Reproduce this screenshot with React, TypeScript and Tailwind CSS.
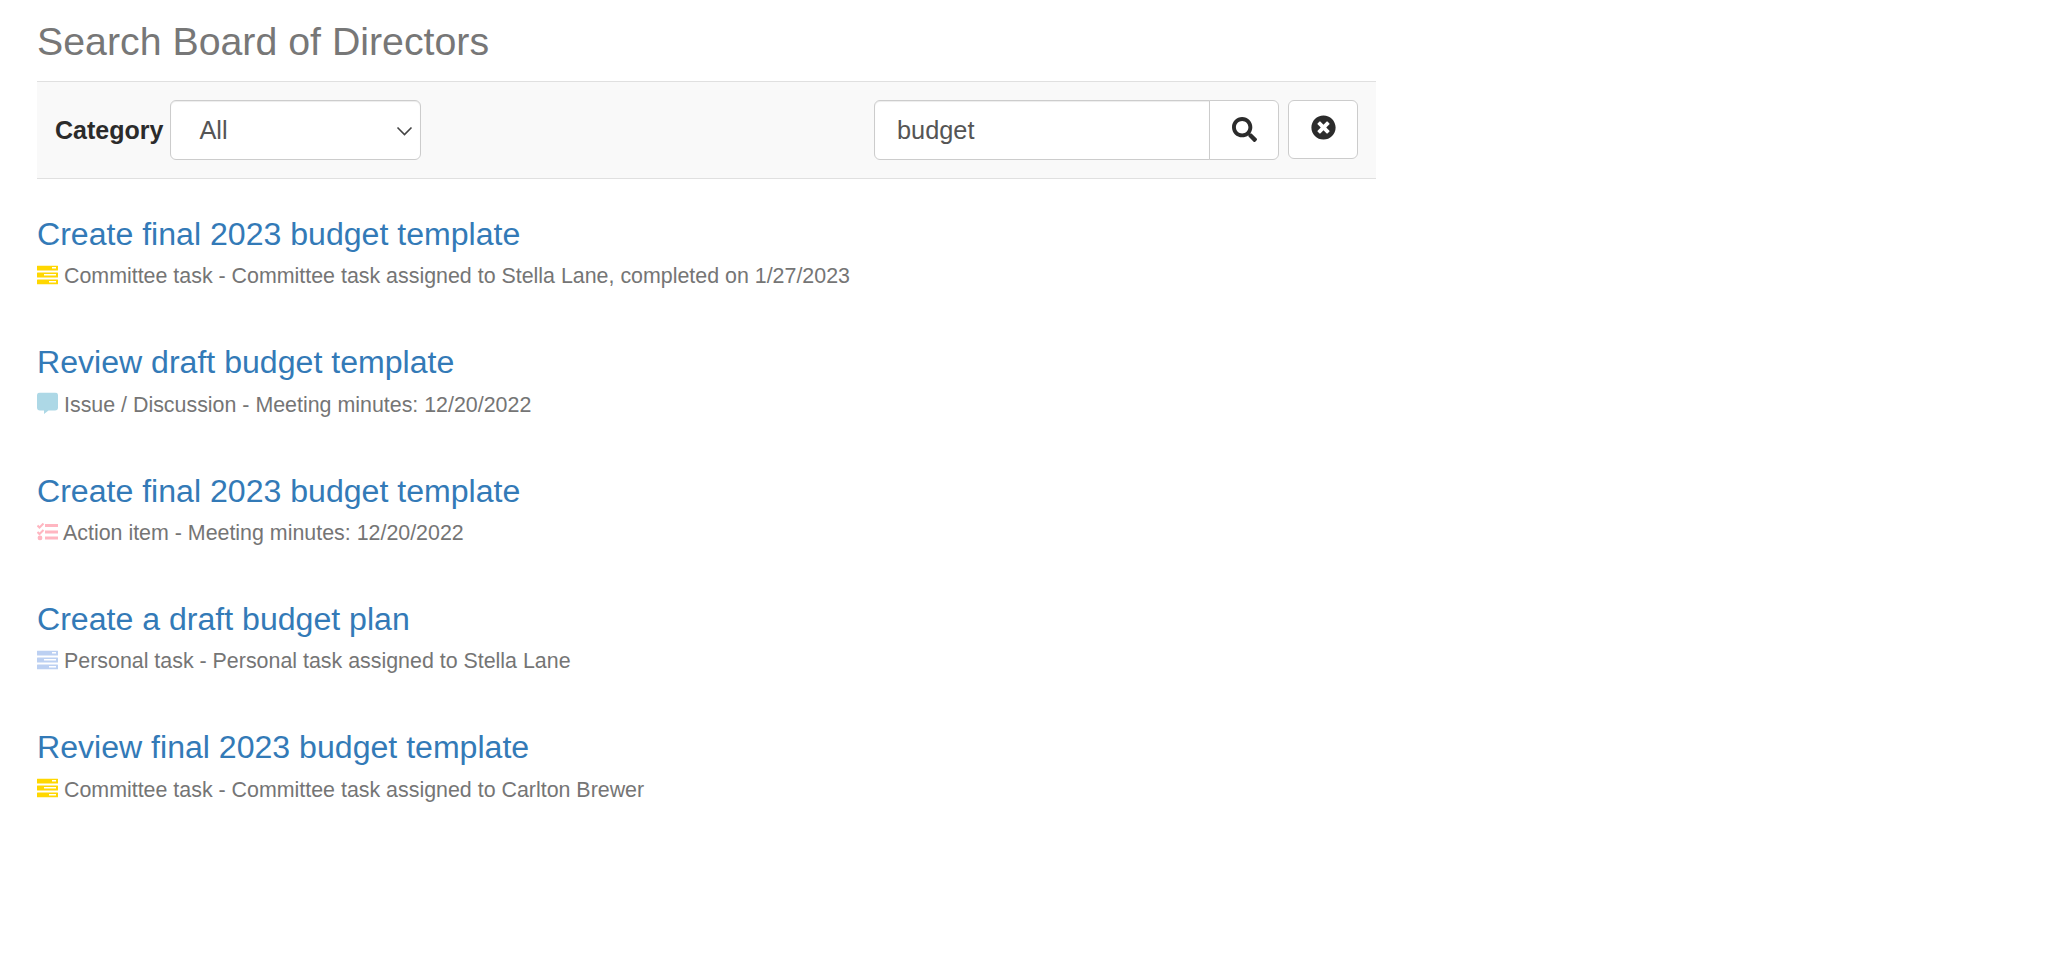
import { FaSearch, FaTimesCircle } from "react-icons/fa";
import type { ReactNode } from "react";

function StackIcon({ color }: { color: string }) {
  return (
    <svg width="21" height="19" viewBox="0 0 21 19" className="mr-[6px] shrink-0 -translate-y-[1.5px]">
      <rect x="0" y="0" width="21" height="5" rx="0.5" fill={color} />
      <rect x="0" y="7" width="21" height="5" rx="0.5" fill={color} />
      <rect x="0" y="14" width="21" height="5" rx="0.5" fill={color} />
      <rect x="15" y="1.5" width="4" height="1.5" fill="#fff" />
      <rect x="7" y="8.5" width="12" height="1.5" fill="#fff" />
      <rect x="12" y="15.5" width="7" height="1.5" fill="#fff" />
    </svg>
  );
}

function CommentIcon() {
  return (
    <svg width="21" height="22" viewBox="0 0 21 22" className="mr-[6px] shrink-0 -translate-y-[1.5px]">
      <path
        d="M3 0h15a3 3 0 0 1 3 3v12a3 3 0 0 1-3 3h-6.5l-4.5 3.5v-3.5H3a3 3 0 0 1-3-3V3a3 3 0 0 1 3-3z"
        fill="#add8e6"
      />
    </svg>
  );
}

function ChecklistIcon() {
  return (
    <svg width="21" height="18" viewBox="0 0 21 18" className="mr-[5px] shrink-0 -translate-y-[1.5px]">
      <g fill="none" stroke="#ffb6c1">
        <path d="M0.5 3l2 2 4-4" strokeWidth="2" />
        <path d="M0.5 9.5l2 2 4-4" strokeWidth="2" />
        <path d="M8 3h13M8 9.5h13M8 15.5h13" strokeWidth="3" />
      </g>
      <circle cx="3" cy="15.5" r="2.4" fill="#ffb6c1" />
    </svg>
  );
}

function Result({
  title,
  icon,
  meta,
}: {
  title: string;
  icon: ReactNode;
  meta: string;
}) {
  return (
    <div className="mb-[50.83px]">
      <a href="#" className="block text-[32.1px] leading-[40px] text-[#337ab7]">
        {title}
      </a>
      <div className="mt-[7.5px] flex h-[30px] items-center text-[21.4px] text-[#757575]">
        {icon}
        <span>{meta}</span>
      </div>
    </div>
  );
}

const results = [
  {
    title: "Create final 2023 budget template",
    icon: <StackIcon color="#ffd700" />,
    meta: "Committee task - Committee task assigned to Stella Lane, completed on 1/27/2023",
  },
  {
    title: "Review draft budget template",
    icon: <CommentIcon />,
    meta: "Issue / Discussion - Meeting minutes: 12/20/2022",
  },
  {
    title: "Create final 2023 budget template",
    icon: <ChecklistIcon />,
    meta: "Action item - Meeting minutes: 12/20/2022",
  },
  {
    title: "Create a draft budget plan",
    icon: <StackIcon color="#bcd0f2" />,
    meta: "Personal task - Personal task assigned to Stella Lane",
  },
  {
    title: "Review final 2023 budget template",
    icon: <StackIcon color="#ffd700" />,
    meta: "Committee task - Committee task assigned to Carlton Brewer",
  },
];

export default function App() {
  return (
    <div className="min-h-[963px] bg-white font-['Liberation_Sans',Arial,sans-serif]">
      <div className="ml-[37px] w-[1339px] pt-[17px]">
        <h1 className="text-[39.3px] leading-[48px] font-normal text-[#777777]">
          Search Board of Directors
        </h1>
        <div className="mt-[16px] flex h-[98px] items-center justify-between border-y border-[#e0e0e0] bg-[#f9f9f9] px-[18px]">
          <div className="flex items-center gap-[7px]">
            <label className="mt-[1px] text-[25px] font-bold text-[#2b2b2b]">Category</label>
            <div className="relative">
              <select className="block h-[60px] w-[251px] appearance-none rounded-[6px] border border-[#cccccc] bg-white pl-[28px] pt-[1px] text-[25.33px] text-[#555555] shadow-[inset_0_1px_1px_rgba(0,0,0,0.075)]">
                <option>All</option>
              </select>
              <svg
                width="17"
                height="10"
                viewBox="0 0 17 10"
                className="pointer-events-none absolute right-[8px] top-[26px]"
              >
                <path d="M1.5 1.5L8.5 8.5l7-7" fill="none" stroke="#444444" strokeWidth="1.6" />
              </svg>
            </div>
          </div>
          <div className="flex items-center gap-[9px]">
            <div className="flex">
              <input
                readOnly
                value="budget"
                className="h-[60px] w-[336px] rounded-l-[6px] border border-[#cccccc] bg-white px-[22px] text-[25.33px] text-[#555555] shadow-[inset_0_1px_1px_rgba(0,0,0,0.075)]"
              />
              <button className="ml-[-1px] flex h-[60px] w-[70px] items-center justify-center rounded-r-[6px] border border-[#cccccc] bg-white text-[#2b2b2b]">
                <FaSearch className="size-[25px] mt-[-2px]" />
              </button>
            </div>
            <button className="mt-[-1px] flex h-[59px] w-[70px] items-center justify-center rounded-[6px] border border-[#cccccc] bg-white text-[#2b2b2b]">
              <FaTimesCircle className="mt-[-4px] size-[25px]" />
            </button>
          </div>
        </div>
        <div className="pt-[35px]">
          {results.map((r, i) => (
            <Result key={i} title={r.title} icon={r.icon} meta={r.meta} />
          ))}
        </div>
      </div>
    </div>
  );
}
